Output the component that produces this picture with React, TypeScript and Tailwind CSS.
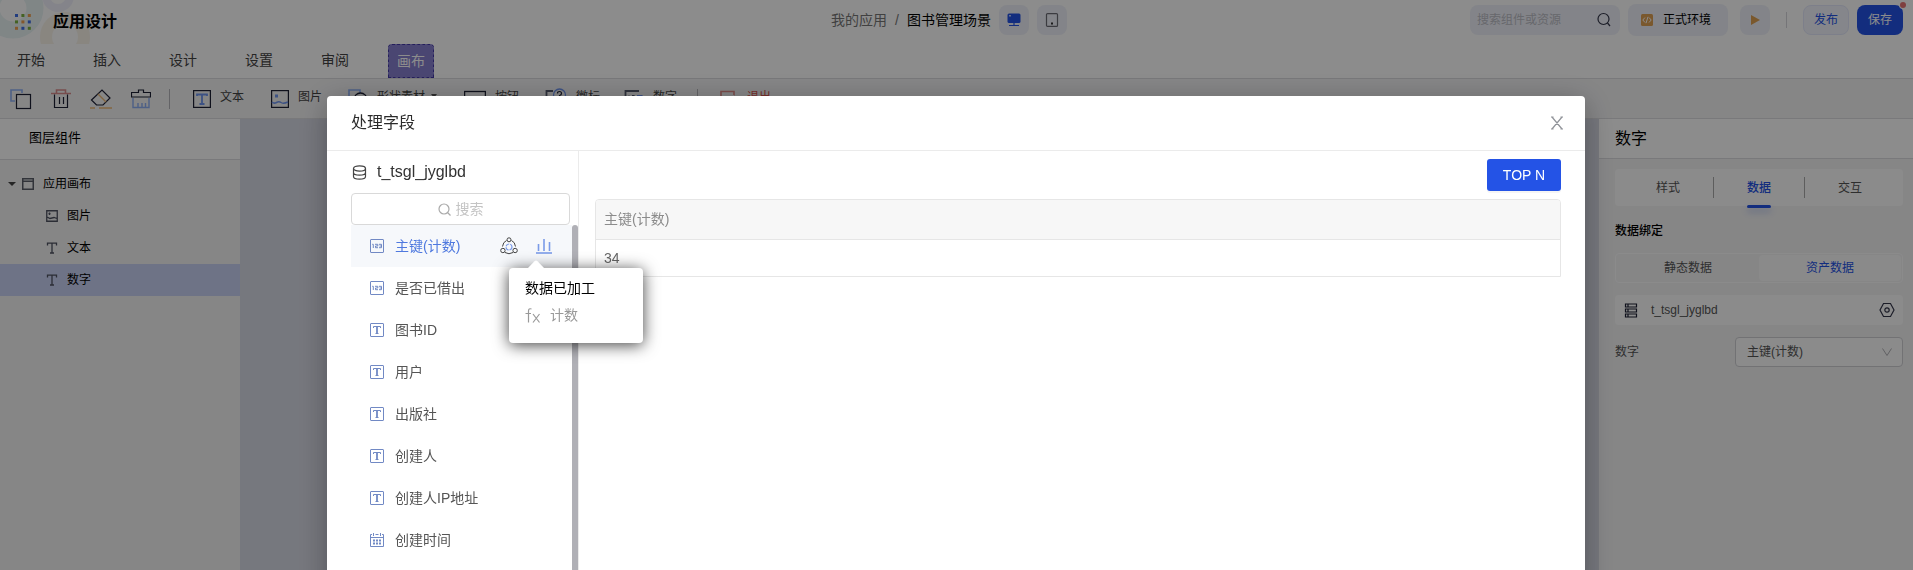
import type { ReactNode } from 'react';

const NAVY = '#1d2034';
const BLUE = '#7b9be8';

function Svg({ size = 20, children, className = '' }: { size?: number; children: ReactNode; className?: string }) {
  return (
    <svg width={size} height={size} viewBox={`0 0 ${size} ${size}`} fill="none" aria-hidden="true" className={`shrink-0 ${className}`}>
      {children}
    </svg>
  );
}

function CopyIcon() {
  return (
    <Svg size={22}>
      <path d="M5 13H1V2H12V5" stroke="#8eb0f5" strokeWidth="1.6" />
      <rect x="6.5" y="6.5" width="14" height="14" stroke={NAVY} strokeWidth="1.2" />
    </Svg>
  );
}

function TrashIcon() {
  return (
    <Svg>
      <path d="M0 4.5H20M5.5 4V1H14.5V4" stroke="#d98c8c" strokeWidth="1.6" />
      <path d="M3.5 5.5V18.5H16.5V5.5M8.5 8V15M12.500 8V15" stroke={NAVY} strokeWidth="1.2" />
    </Svg>
  );
}

function EraserIcon() {
  return (
    <Svg size={22}>
      <path d="M1.5 12L12 2L20 10L13 17H6.5Z" stroke={NAVY} strokeWidth="1.2" />
      <path d="M8 6L16 14M0 20H5M9 20H22" stroke="#eebb77" strokeWidth="1.4" />
    </Svg>
  );
}

function BrushIcon() {
  return (
    <Svg>
      <path d="M2 9V18.500H18V9M7 18V14M11 18V14M14.5 18V14" stroke="#8eb0f5" strokeWidth="1.4" />
      <path d="M0.500 8V3.500H7.500V1H12.500V3.500H19.500V8Z" stroke={NAVY} strokeWidth="1.2" />
    </Svg>
  );
}

function TextIcon() {
  return (
    <Svg size={18}>
      <rect x="0.6" y="0.6" width="16.8" height="16.8" stroke={NAVY} strokeWidth="1.2" />
      <path d="M4 6V4.5H14V6M9 4.5V14M6.5 14H11.5" stroke="#6f95f0" strokeWidth="1.8" />
    </Svg>
  );
}

function PictureIcon() {
  return (
    <Svg size={18}>
      <rect x="0.6" y="0.6" width="16.8" height="16.8" stroke={NAVY} strokeWidth="1.2" />
      <rect x="4" y="4.5" width="3" height="3" fill="#6f95f0" />
      <path d="M1 12Q3 14 5.500 12.500T10 12.500T17 12" stroke="#6f95f0" strokeWidth="1.5" />
    </Svg>
  );
}

function ShapeIcon() {
  return (
    <Svg>
      <path d="M4 13H1V1H12V4" stroke="#8eb0f5" strokeWidth="1.6" />
      <circle cx="12.500" cy="10.500" r="6.500" stroke={NAVY} strokeWidth="1.3" />
    </Svg>
  );
}

function ButtonIcon() {
  return (
    <Svg size={22}>
      <rect x="0.6" y="3.5" width="20.8" height="14" stroke={NAVY} strokeWidth="1.3" />
    </Svg>
  );
}

function BadgeIcon() {
  return (
    <Svg size={22}>
      <path d="M8 3H1.500V19H17V13" stroke="#555b6e" strokeWidth="1.800" />
      <circle cx="14.500" cy="7" r="6" stroke="#6f95f0" strokeWidth="1.300" />
      <path d="M12.500 5.500Q12.500 3.500 14.500 3.500T16.500 5.500Q16.500 7 14.500 7.500V8.500M14.500 9.500V10.500" stroke={NAVY} strokeWidth="1.200" />
    </Svg>
  );
}

function NumberIcon() {
  return (
    <Svg>
      <path d="M15 2H1.500V18H15" stroke="#555b6e" strokeWidth="1.800" />
      <path d="M5 6.500V13M8 6.500H10V10H8V13H10" stroke="#555b6e" strokeWidth="1.200" />
      <path d="M13 6.500H18V12.500H13M14 10H18" stroke="#6f95f0" strokeWidth="1.200" />
    </Svg>
  );
}

function ExitIcon() {
  return (
    <Svg size={18}>
      <path d="M14 5V1.500H1V16H14V13" stroke="#e08a86" strokeWidth="1.600" />
      <path d="M6 9H17M14 6L17 9L14 12" stroke="#d8554f" strokeWidth="1.300" />
    </Svg>
  );
}

function ToolLabel({ icon, label, className = '', menu = false }: { icon: ReactNode; label: string; className?: string; menu?: boolean }) {
  return (
    <button type="button" className={`flex shrink-0 items-center gap-[9px] whitespace-nowrap ${className}`}>
      {icon}
      <span className="flex items-center gap-[6px] pb-1">
        {label}
        {menu && <Svg size={6}><path d="M0 0H6L3 4Z" fill="#555" /></Svg>}
      </span>
    </button>
  );
}

const menuItems = ['开始', '插入', '设计', '设置', '审阅'];

function Logo() {
  const colors = ['#3f6fe8', '#7cb342', '#f0a050', '#7cb342', '#f0a050', '#3f6fe8', '#f0a050', '#3f6fe8', '#7cb342'];
  return (
    <Svg size={16}>
      {colors.map((color, i) => (
        <rect key={i} x={(i % 3) * 6.400} y={Math.floor(i / 3) * 6.400} width="3" height="3" fill={color} />
      ))}
    </Svg>
  );
}

function Header() {
  return (
    <header className="relative border-b border-[#dcdce0] bg-white">
      <svg width="100" height="44" viewBox="0 0 100 44" fill="none" className="absolute top-0 left-0" aria-hidden="true">
        <circle cx="13" cy="8" r="22" stroke="#e9f4f5" strokeWidth="17" />
        <circle cx="58" cy="-4" r="12" stroke="#f1f1fb" strokeWidth="8" />
        <circle cx="65" cy="37" r="19" stroke="#f9f4ea" strokeWidth="12" />
      </svg>
      <div className="relative flex h-11 items-center">
        <div className="flex flex-1 items-center gap-[22px] pl-[15px]">
          <Logo />
          <h1 className="text-base font-bold text-black">应用设计</h1>
        </div>
        <div className="flex items-center pr-5 pb-1 text-sm">
          <a href="#apps" className="text-[#777]">我的应用</a>
          <span className="px-2 text-[#777]">/</span>
          <span className="text-black">图书管理场景</span>
          <button type="button" aria-label="桌面端" className="ml-2 flex h-[30px] w-[30px] items-center justify-center rounded-lg bg-[#eff1f9]">
            <Svg size={14}>
              <rect x="0.500" y="0.500" width="13" height="9.500" rx="1.500" fill="#2453e6" />
              <path d="M2 12.500H12M7 10V12.500" stroke="#2453e6" strokeWidth="1.200" />
              <rect x="2" y="2" width="2" height="1.500" fill="#b9caff" />
            </Svg>
          </button>
          <button type="button" aria-label="移动端" className="ml-2 flex h-[30px] w-[30px] items-center justify-center rounded-lg bg-[#eff1f9]">
            <Svg size={14}>
              <rect x="1.500" y="0.600" width="11" height="12.800" rx="1" stroke="#6c6c76" strokeWidth="1.200" />
              <rect x="6" y="9.500" width="2" height="2" fill="#333" />
            </Svg>
          </button>
        </div>
        <div className="flex flex-1 items-center justify-end pr-[10px] pb-1 text-xs">
          <label className="flex h-[30px] w-[150px] items-center rounded-lg bg-[#eff1f9] pr-2 pl-[7px]">
            <input aria-label="搜索组件或资源" placeholder="搜索组件或资源" className="w-full min-w-0 bg-transparent outline-none placeholder:text-[#bcbdc6]" />
            <Svg size={16}>
              <circle cx="7.500" cy="7" r="5.500" stroke="#33364a" strokeWidth="1.200" />
              <path d="M11.500 11L14 14" stroke="#33364a" strokeWidth="1.200" />
            </Svg>
          </label>
          <button type="button" className="ml-2 flex h-8 w-[100px] items-center justify-center gap-[10px] rounded-lg bg-[#eff1f9] pr-1 text-black">
            <Svg size={12}>
              <rect width="12" height="12" rx="1.500" fill="#dfa052" />
              <path d="M4 3.500L1.800 6L4 8.500M8 3.500L10.200 6L8 8.500M7 2.800L5 9.200" stroke="white" />
            </Svg>
            正式环境
          </button>
          <button type="button" aria-label="运行" className="ml-3 flex h-[30px] w-[30px] items-center justify-center rounded-lg bg-[#eff1f9]">
            <Svg size={10}>
              <path d="M1 0L10 5L1 10Z" fill="#dfa052" />
            </Svg>
          </button>
          <span className="mx-4 h-4 w-px bg-[#d5d5da]" />
          <button type="button" className="h-[30px] w-[46px] rounded-lg border border-[#e3e8fb] bg-[#f3f5fd] text-[#2453e6]">发布</button>
          <button type="button" className="relative ml-2 h-[30px] w-[46px] rounded-lg bg-[#2453e6] text-white">
            保存
            <span className="absolute -top-[3px] -right-[3px] h-[6px] w-[6px] rounded-full bg-[#e87474] ring-1 ring-white" />
          </button>
        </div>
      </div>
      <nav className="relative flex gap-[30px] pl-2 text-sm text-[#444]">
        {menuItems.map((item) => (
          <button key={item} type="button" className="h-[34px] px-[9px] pb-[2px]">
            {item}
          </button>
        ))}
        <button type="button" className="h-[34px] rounded-t border border-dashed border-white bg-[#8880d0] px-2 text-white outline-1 -outline-offset-1 outline-dashed outline-[#4338a8]">
          画布
        </button>
      </nav>
    </header>
  );
}

function Toolbar() {
  return (
    <div className="flex h-10 shrink-0 items-center border-b border-[#dcdce0] bg-[#f4f4f5] pl-[10px] text-xs text-[#444]">
      <div className="flex items-center gap-[19px]">
        <button type="button" aria-label="复制"><CopyIcon /></button>
        <button type="button" aria-label="删除"><TrashIcon /></button>
        <button type="button" aria-label="清除"><EraserIcon /></button>
        <button type="button" aria-label="格式刷"><BrushIcon /></button>
      </div>
      <span className="ml-[18px] h-5 w-px bg-[#b5b5ba]" />
      <ToolLabel icon={<TextIcon />} label="文本" className="ml-[23px]" />
      <ToolLabel icon={<PictureIcon />} label="图片" className="ml-[27px]" />
      <ToolLabel icon={<ShapeIcon />} label="形状素材" menu className="ml-[26px]" />
      <ToolLabel icon={<ButtonIcon />} label="按钮" className="ml-[27px]" />
      <ToolLabel icon={<BadgeIcon />} label="徽标" className="ml-[26px]" />
      <ToolLabel icon={<NumberIcon />} label="数字" className="ml-6" />
      <span className="ml-5 h-5 w-px bg-[#b5b5ba]" />
      <ToolLabel icon={<ExitIcon />} label="退出" className="ml-[22px] text-[#d8554f]" />
    </div>
  );
}

function TreeT() {
  return (
    <Svg size={12}>
      <path d="M1.500 3.500V1.200H10.500V3.500M6 1.200V11M4 11H8" stroke="#4f5361" strokeWidth="1.300" />
    </Svg>
  );
}

function LayerPanel() {
  return (
    <aside className="w-60 shrink-0 bg-[#f4f4f5] text-xs text-black">
      <h2 className="flex h-[41px] items-center border-b border-[#dcdce0] bg-white pb-[2px] pl-[29px] text-[13px]">图层组件</h2>
      <div className="pt-2">
        <button type="button" className="flex h-8 w-full items-center pl-2">
          <Svg size={8}><path d="M0 2H8L4 6Z" fill="#444" /></Svg>
          <Svg size={12} className="mr-[9px] ml-[6px]">
            <path d="M0.750 0.750H11.250V11.250H0.750ZM1 3.200H11" stroke="#5b5f6b" strokeWidth="1.500" />
          </Svg>
          应用画布
        </button>
        <button type="button" className="flex h-8 w-full items-center gap-[9px] pl-[46px]">
          <Svg size={12}>
            <path d="M0.750 0.750H11.250V11.250H0.750ZM1 7L4 8.500L8 7.500L11 8.500M3.500 2.500V5M2.500 3.700H4.500" stroke="#4f5361" strokeWidth="1.300" />
          </Svg>
          图片
        </button>
        <button type="button" className="flex h-8 w-full items-center gap-[9px] pl-[46px]"><TreeT />文本</button>
        <button type="button" className="flex h-8 w-full items-center gap-[9px] bg-[#c9d2f5] pl-[46px]"><TreeT />数字</button>
      </div>
    </aside>
  );
}

function PropertyPanel() {
  return (
    <aside className="w-[314px] shrink-0 bg-[#f4f4f5] text-xs text-[#555]">
      <h2 className="flex h-10 items-center border-b border-[#dcdce0] bg-white pl-4 text-base text-black">数字</h2>
      <div className="flex flex-col pt-[10px] pr-[10px] pl-4">
        <div role="tablist" className="grid h-[37px] grid-cols-[99px_91px_1fr] rounded bg-[#fdfdfd]">
          <button type="button" role="tab" className="my-2 border-r border-[#aaa] pl-2">样式</button>
          <button type="button" role="tab" aria-selected="true" className="relative my-2 border-r border-[#aaa] text-[#2453e6]">
            <span className="font-medium">数据</span>
            <span className="absolute -bottom-[10px] left-1/2 h-[3px] w-6 -translate-x-1/2 rounded-sm bg-[#2453e6] shadow-[0_4px_6px_rgba(36,83,230,0.3)]" />
          </button>
          <button type="button" role="tab" className="pr-2">交互</button>
        </div>
        <h3 className="mt-[17px] text-xs font-medium text-black">数据绑定</h3>
        <div className="mt-[14px] grid h-[30px] grid-cols-2 rounded border border-[#fdfdfd] p-px">
          <button type="button">静态数据</button>
          <button type="button" className="rounded bg-[#fcfcfc] text-[#2453e6]">资产数据</button>
        </div>
        <div className="mt-3 flex h-[30px] items-center rounded bg-[#fdfdfd] px-2">
          <Svg size={16}>
            <path d="M2.500 2H13.500V5H2.500ZM2.500 7H13.500V10H2.500ZM2.500 12H13.500V15H2.500ZM5 2V5M5 7V10M5 12V15" stroke={NAVY} strokeWidth="1.200" />
          </Svg>
          <span className="ml-3 flex-1 pb-px">t_tsgl_jyglbd</span>
          <button type="button" aria-label="设置数据">
            <Svg size={16}>
              <path d="M4.500 1.500H11.500L15 8L11.500 14.500H4.500L1 8Z" stroke="#33364a" strokeWidth="1.200" />
              <circle cx="8" cy="8" r="2.200" stroke="#33364a" strokeWidth="1.200" />
            </Svg>
          </button>
        </div>
        <div className="mt-3 flex items-center justify-between">
          <label htmlFor="number-field">数字</label>
          <div className="relative w-[168px]">
            <select id="number-field" className="h-[30px] w-full appearance-none rounded border border-[#cfd0d4] bg-[#fdfdfd] pl-[11px] text-xs">
              <option>主键(计数)</option>
            </select>
            <Svg size={10} className="pointer-events-none absolute top-[10px] right-[11px]">
              <path d="M0.500 1.500L5 8.500L9.500 1.500" stroke="#b0b0b5" />
            </Svg>
          </div>
        </div>
      </div>
    </aside>
  );
}

type FieldKind = 'number' | 'text' | 'date';

function FieldIcon({ kind }: { kind: FieldKind }) {
  if (kind === 'date') {
    return (
      <Svg size={14}>
        <path d="M2 1.500H0.500V13.500H13.500V1.500H12M5.500 1.500H8.500M3.500 0V3M10.500 0V3M0.500 4.500H13.500" stroke="#7189c4" />
        <path d="M3 7.500H11M3 10.500H11" stroke="#7189c4" strokeWidth="2" strokeDasharray="2 1" />
      </Svg>
    );
  }
  return (
    <Svg size={14}>
      <rect x="0.500" y="0.500" width="13" height="13" rx="0.500" stroke="#7189c4" />
      {kind === 'number' ? (
        <path d="M2.200 5.300H3.300V9M5 5.300H7.800V7H5.500V8.700H8M9 5.300H11.500V8.700H9M9.500 7H11.500" stroke="#7189c4" />
      ) : (
        <>
          <path d="M3.500 5V3.500H10.500V5M5.500 10.500H8.500" stroke="#7189c4" />
          <path d="M7 3.500V10.500" stroke="#7189c4" strokeWidth="1.800" />
        </>
      )}
    </Svg>
  );
}

const fields: { name: string; kind: FieldKind }[] = [
  { name: '是否已借出', kind: 'number' },
  { name: '图书ID', kind: 'text' },
  { name: '用户', kind: 'text' },
  { name: '出版社', kind: 'text' },
  { name: '创建人', kind: 'text' },
  { name: '创建人IP地址', kind: 'text' },
  { name: '创建时间', kind: 'date' },
];

function ProcessedTip() {
  return (
    <div role="tooltip" className="absolute top-[43px] left-[158px] z-10 h-[75px] w-[134px] rounded bg-white px-4 pt-2 shadow-[0_2px_16px_rgba(0,0,0,0.75)]">
      <svg width="18" height="9" viewBox="0 0 18 9" className="absolute -top-2 left-[18px]" aria-hidden="true">
        <path d="M0 9L7.500 1.200Q9 -0.200 10.500 1.200L18 9Z" fill="white" />
      </svg>
      <p className="leading-6 text-black">数据已加工</p>
      <p className="flex items-center gap-[10px] leading-[30px] text-[#999]">
        <Svg size={15}>
          <path d="M6.500 1Q3.500 0 3.500 3V14.500M0.500 5.500H6M8 6L14.500 14.500M14.500 6L8 14.500" stroke="#999" strokeWidth="1.200" />
        </Svg>
        计数
      </p>
    </div>
  );
}

function FieldList() {
  return (
    <div className="flex flex-1">
      <ul className="flex-1 text-sm text-[#555]">
        <li className="relative flex h-[42px] items-center bg-[#f6f8fb] pl-[19px] text-[#4f79df]">
          <FieldIcon kind="number" />
          <span className="ml-[11px] flex-1">主键(计数)</span>
          <button type="button" aria-label="合并" className="mr-[18px]">
            <Svg size={18}>
              <path d="M6.500 3.500Q3 5 2.500 9.500M11.500 3.500Q15 5 15.500 9.500M5 15.500Q9 18 13 15.500" stroke="#444" />
              <circle cx="9" cy="2.800" r="2" stroke="#444" />
              <circle cx="2.900" cy="13.500" r="2.200" stroke="#444" />
              <circle cx="15.100" cy="13.500" r="2.200" stroke="#444" />
              <circle cx="9" cy="10" r="3" stroke={BLUE} strokeWidth="1.200" strokeDasharray="4 1" />
            </Svg>
          </button>
          <button type="button" aria-label="数据加工" className="mr-5">
            <Svg size={16}>
              <path d="M2.500 6V13M8 1V13M13.500 4V13" stroke={BLUE} strokeWidth="1.600" />
              <path d="M0 15H16" stroke="#5f86e3" strokeWidth="1.300" />
            </Svg>
          </button>
          <ProcessedTip />
        </li>
        {fields.map((field) => (
          <li key={field.name} className="flex h-[42px] items-center gap-[11px] pl-[19px]">
            <FieldIcon kind={field.kind} />
            {field.name}
          </li>
        ))}
      </ul>
      <div className="w-[6px] rounded-t-full bg-[#b0b0b6]" />
    </div>
  );
}

function FieldDialog() {
  return (
    <div role="dialog" aria-modal="true" aria-labelledby="dialog-title" className="mx-auto mt-24 flex min-h-screen w-full max-w-[1258px] flex-col rounded bg-white shadow-[0_6px_30px_rgba(0,0,0,0.3)]">
      <header className="flex h-[55px] shrink-0 items-center justify-between border-b border-[#ebebeb] px-6">
        <h2 id="dialog-title" className="text-base text-[#2b2b2b]">处理字段</h2>
        <button type="button" aria-label="关闭" className="-mr-[3px]">
          <Svg size={14}>
            <path d="M1 1H3.500M10.500 1H13M1 13H3.500M10.500 13H13M2 1L12 13M12 1L2 13" stroke="#909399" strokeWidth="1.200" />
          </Svg>
        </button>
      </header>
      <div className="flex flex-1">
        <section className="flex w-[252px] shrink-0 flex-col border-r border-[#ebebeb] pl-6">
          <h3 className="flex h-[42px] items-center gap-[10px] text-base text-[#333]">
            <Svg size={15} className="ml-px">
              <ellipse cx="7.500" cy="3.500" rx="6" ry="2.600" stroke="#444" strokeWidth="1.200" />
              <path d="M1.500 3.500V11.500C1.500 15 13.500 15 13.500 11.500V3.500M1.500 7.500C1.500 11 13.500 11 13.500 7.500" stroke="#444" strokeWidth="1.200" />
            </Svg>
            t_tsgl_jyglbd
          </h3>
          <label className="mr-2 flex h-8 items-center justify-center gap-[5px] rounded border border-[#d9d9d9] text-sm">
            <Svg size={13}>
              <circle cx="6" cy="6" r="5" stroke="#aaa" strokeWidth="1.200" />
              <path d="M9.500 9.500L12.500 12.500" stroke="#aaa" strokeWidth="1.200" />
            </Svg>
            <input aria-label="搜索" placeholder="搜索" className="w-7 bg-transparent outline-none placeholder:text-[#c4c4c4]" />
          </label>
          <FieldList />
        </section>
        <section className="flex flex-1 flex-col pt-2 pr-6 pl-4">
          <button type="button" className="h-8 w-[74px] self-end rounded-[3px] bg-[#2453e6] text-sm font-medium text-white shadow-[0_2px_0_rgba(0,0,0,0.04)]">TOP N</button>
          <div className="mt-2 overflow-hidden rounded-t border border-[#e6e6e6]">
            <table className="w-full text-left text-sm text-[#666]">
              <thead>
                <tr className="h-[39px] border-b border-[#e6e6e6] bg-[#f7f7f7] text-[#8c8c8c]">
                  <th className="px-2 font-normal">主键(计数)</th>
                </tr>
              </thead>
              <tbody>
                <tr className="h-[37px]">
                  <td className="px-2">34</td>
                </tr>
              </tbody>
            </table>
          </div>
        </section>
      </div>
    </div>
  );
}

export default function App() {
  return (
    <div className="flex min-h-screen flex-col bg-[#d8dae5] font-['Liberation_Sans','Noto_Sans_CJK_SC',sans-serif]">
      <Header />
      <Toolbar />
      <main className="flex flex-1 justify-between">
        <LayerPanel />
        <PropertyPanel />
      </main>
      <div className="fixed inset-0 overflow-hidden bg-black/45 pr-px">
        <FieldDialog />
      </div>
    </div>
  );
}
